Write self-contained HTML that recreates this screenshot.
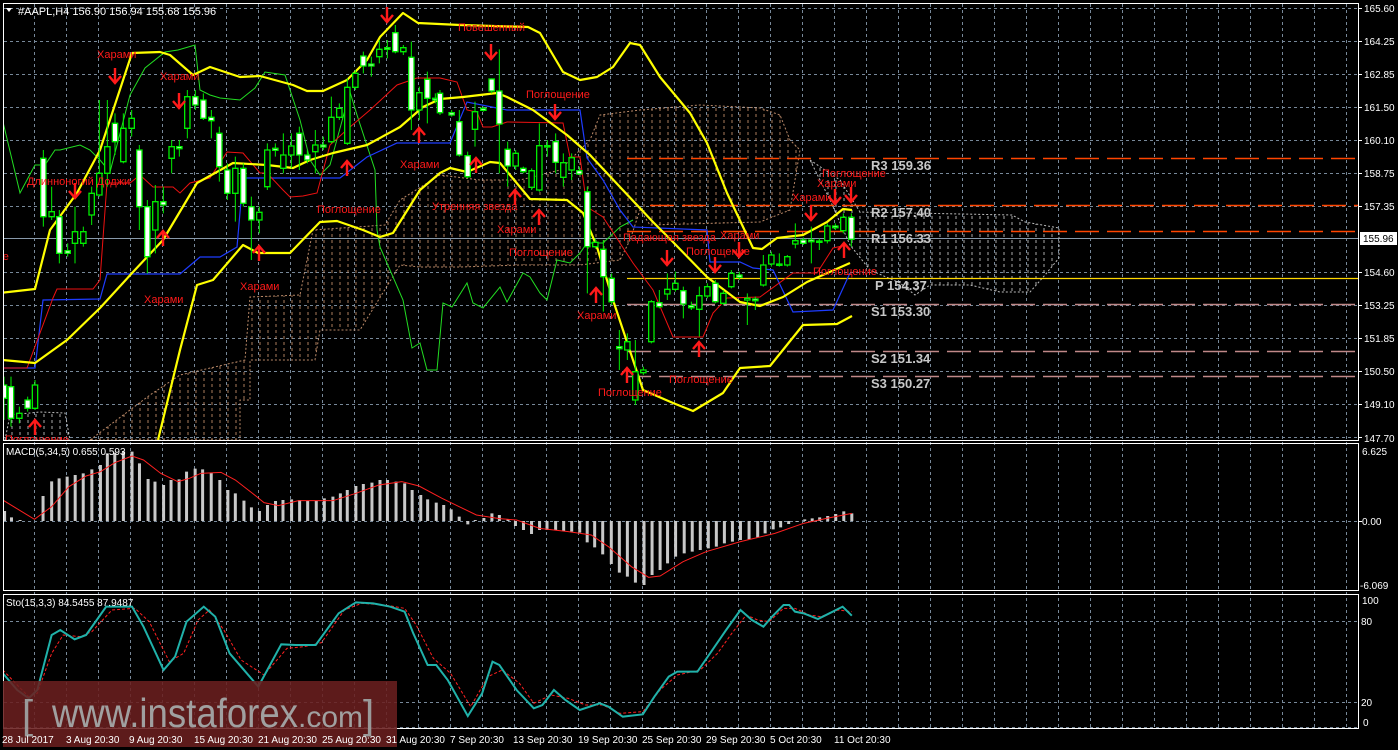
<!DOCTYPE html>
<html><head><meta charset="utf-8"><style>
html,body{margin:0;padding:0;background:#000;width:1398px;height:750px;overflow:hidden}
svg{display:block}
text{font-family:"Liberation Sans","DejaVu Sans",sans-serif}
.lb{fill:#ff1a1a;font-size:11px}
.ax{fill:#fff;font-size:10px}
.pv{fill:#c8c8c8;font-size:13px;font-weight:bold;font-family:"Liberation Mono",monospace}
.ns{vector-effect:non-scaling-stroke}
</style></head><body>
<svg width="1398" height="750" viewBox="0 0 1398 750" xmlns="http://www.w3.org/2000/svg">
<defs>
<pattern id="po" width="8" height="6" patternUnits="userSpaceOnUse"><line x1="4" y1="0" x2="4" y2="3" stroke="#c8926c" stroke-width="1"/></pattern>
<pattern id="pw" width="8" height="6" patternUnits="userSpaceOnUse"><line x1="4" y1="0" x2="4" y2="3" stroke="#aaa" stroke-width="1"/></pattern>
<clipPath id="cm"><rect x="4" y="4" width="1354" height="436"/></clipPath>
<clipPath id="cd"><rect x="4" y="444" width="1354" height="146"/></clipPath>
<clipPath id="cs"><rect x="4" y="595" width="1354" height="133"/></clipPath>
<g id="ad"><path d="M0 -8V6M-6 0L0 7L6 0" fill="none" stroke="#ff1a1a" stroke-width="2.4"/></g>
<g id="au"><path d="M0 8V-6M-6 0L0 -7L6 0" fill="none" stroke="#ff1a1a" stroke-width="2.4"/></g>
</defs>
<rect width="1398" height="750" fill="#000"/>

<!-- grids -->
<g stroke="#778899" stroke-width="1" stroke-dasharray="3,3" fill="none">
<path d="M4 8.5H1358M4 41.5H1358M4 74.5H1358M4 107.5H1358M4 140.5H1358M4 173.5H1358M4 206.5H1358M4 272.5H1358M4 305.5H1358M4 338.5H1358M4 371.5H1358M4 404.5H1358M4 437.5H1358"/>
<path d="M4 521.5H1358M4 621.5H1358M4 702.5H1358M4 727.5H1358"/>
<path d="M34.5 4V728M66.5 4V728M98.5 4V728M130.5 4V728M162.5 4V728M194.5 4V728M226.5 4V728M258.5 4V728M290.5 4V728M322.5 4V728M354.5 4V728M386.5 4V728M418.5 4V728M450.5 4V728M482.5 4V728M514.5 4V728M546.5 4V728M578.5 4V728M610.5 4V728M642.5 4V728M674.5 4V728M706.5 4V728M738.5 4V728M770.5 4V728M802.5 4V728M834.5 4V728M866.5 4V728M898.5 4V728M930.5 4V728M962.5 4V728M994.5 4V728M1026.5 4V728M1058.5 4V728M1090.5 4V728M1122.5 4V728M1154.5 4V728M1186.5 4V728M1218.5 4V728M1250.5 4V728M1282.5 4V728M1314.5 4V728M1346.5 4V728"/>
</g>
<line x1="4" y1="238.5" x2="1358" y2="238.5" stroke="#8899aa" stroke-width="1"/>

<g clip-path="url(#cm)">
<polygon fill="url(#po)" stroke="#d9a07a" stroke-dasharray="2,2" stroke-width="1" opacity="0.85" points="90,440 150,395 180,375 245,360 250,297 300,295 313,230 385,225 400,200 440,175 480,180 520,180 560,170 590,140 600,115 640,110 700,105 760,108 780,115 790,140 800,150 790,210 760,222 650,225 640,210 630,240 620,260 580,265 520,265 460,267 420,267 400,265 360,330 320,330 315,360 300,360 250,360 250,400 240,400 240,440"/>
<polygon fill="url(#pw)" stroke="#bbb" stroke-dasharray="2,2" stroke-width="1" points="810,160 840,180 860,212 1012,215 1025,222 1059,228 1059,258 1045,275 1030,292 1000,292 970,285 930,285 915,295 900,283 870,270 850,245 830,200"/>
<polygon fill="url(#pw)" stroke="#bbb" stroke-dasharray="2,2" stroke-width="1" points="5,440 10,415 40,412 65,413 70,440"/>

<g stroke-width="1.5" fill="none">
<path d="M627 158.5H1358" stroke="#ff4500" stroke-dasharray="24,8"/>
<path d="M650 205.5H1358" stroke="#ff4500" stroke-dasharray="24,8"/>
<path d="M627 231.5H1358" stroke="#ff4500" stroke-dasharray="24,8"/>
<path d="M627 278.5H1358" stroke="#ffd700" stroke-width="1.2"/>
<path d="M627 304.5H1358" stroke="#c08888" stroke-dasharray="24,8"/>
<path d="M627 351.5H1358" stroke="#c08888" stroke-dasharray="24,8"/>
<path d="M627 376.5H1358" stroke="#c08888" stroke-dasharray="24,8"/>
</g>

<polyline fill="none" stroke="#22dd22" stroke-width="1" points="3,122 20,193 35,165 45,165 55,150 60,150 80,145 90,150 100,160 110,172 130,95 145,68 165,52 178,50 195,45 200,90 210,95 220,98 240,100 255,88 265,72 285,75 300,120 310,160 320,175 330,165 345,110 350,92 357,115 375,170 377,230 380,247 403,300 412,348 420,343 427,370 437,370 443,303 452,307 467,283 473,303 483,308 500,287 507,302 523,273 530,277 540,293 547,300 557,260 570,263 580,253 587,243 603,243 620,227 633,220"/>
<polyline fill="none" stroke="#1e3cff" stroke-width="1.2" points="0,368 35,368 43,300 100,299 107,274 180,274 200,257 220,257 237,247 243,178 340,178 367,157 397,143 450,143 467,102 507,110 580,110 587,158 603,180 620,210 633,227 707,230 710,262 740,262 753,268 773,270 793,312 833,310 850,273"/>
<polyline fill="none" stroke="#ee1111" stroke-width="1" points="0,368 27,368 53,298 57,289 93,289 100,280 107,183 130,183 140,175 153,187 173,187 180,193 190,183 210,178 227,152 243,153 260,173 267,173 283,190 290,197 303,196 317,193 330,145 350,127 370,110 397,85 417,78 440,78 457,82 467,110 477,112 483,127 492,127 507,122 563,123 570,157 580,157 587,207 603,217 633,263 653,290 673,337 703,337 713,313 727,298 760,297 793,273 817,273 833,248 847,245"/>

<g fill="none" stroke="#ffff00" stroke-width="2.2" stroke-linejoin="round">
<polyline points="0,293 35,289 50,230 77,193 100,150 132,53 160,52 170,55 193,75 210,67 240,77 260,76 293,85 307,91 323,91 347,80 367,60 380,37 403,13 418,23 460,25 528,27 540,33 563,72 580,80 597,77 613,67 630,43 640,45 660,77 690,113 707,143 727,193 753,248 762,249 777,238 803,235 827,222 843,209 852,210"/>
<polyline points="3,360 35,363 67,340 100,308 133,272 163,240 197,183 233,163 267,165 293,168 310,160 333,153 367,145 400,127 423,107 440,99 463,97 497,93 507,97 533,110 567,135 590,155 620,187 653,222 673,242 707,277 740,302 760,306 783,297 807,282 850,263"/>
<polyline points="158,440 180,350 197,285 213,280 243,245 258,253 290,253 320,222 337,221 363,230 380,237 393,233 420,190 440,173 450,168 467,172 490,162 500,163 530,199 567,200 583,213 597,247 613,300 633,360 643,390 673,403 693,411 723,393 740,368 770,366 803,325 837,324 852,316"/>
</g>

<g transform="scale(0.33333)">
<path class="ns" fill="none" stroke="#00ee00" stroke-width="1" d="M12 1130V1260M33 1130V1280M58 1220V1270M83 1190V1235M105 1140V1230M130 450V680M155 560V660M178 630V790M203 730V770M225 620V790M250 680V740M275 560V675M298 300V590M322 300V560M345 340V465M370 340V490M395 330V410M418 435V690M442 600V820M466 555V760M490 560V640M515 420V520M538 420V470M562 270V415M586 270V330M610 280V360M634 330V415M658 380V545M682 490V600M706 470V665M730 490V620M754 590V780M778 620V700M802 430V570M826 430V470M850 400V520M874 400V505M898 380V510M922 450V490M946 390V520M970 410V450M994 290V430M1018 310V360M1042 235V435M1066 210V270M1090 155V220M1114 170V230M1138 120V190M1162 120V175M1186 75V160M1210 135V165M1234 125V390M1258 260V360M1282 215V370M1306 280V310"/>
<g stroke="#00ee00" stroke-width="1.3">
<rect class="ns" x="4" y="1155" width="16" height="40" fill="#fff"/>
<rect class="ns" x="25" y="1160" width="16" height="95" fill="#fff"/>
<rect class="ns" x="50" y="1240" width="16" height="15" fill="#000"/>
<rect class="ns" x="75" y="1200" width="16" height="25" fill="#fff"/>
<rect class="ns" x="97" y="1155" width="16" height="70" fill="#000"/>
<rect class="ns" x="122" y="475" width="16" height="175" fill="#fff"/>
<rect class="ns" x="147" y="635" width="16" height="15" fill="#000"/>
<rect class="ns" x="170" y="650" width="16" height="110" fill="#fff"/>
<rect class="ns" x="195" y="752" width="16" height="8" fill="#fff"/>
<rect class="ns" x="217" y="695" width="16" height="35" fill="#000"/>
<rect class="ns" x="242" y="695" width="16" height="35" fill="#000"/>
<rect class="ns" x="267" y="580" width="16" height="65" fill="#000"/>
<rect class="ns" x="290" y="520" width="16" height="65" fill="#000"/>
<rect class="ns" x="314" y="440" width="16" height="80" fill="#000"/>
<rect class="ns" x="337" y="370" width="16" height="55" fill="#fff"/>
<rect class="ns" x="362" y="385" width="16" height="100" fill="#000"/>
<rect class="ns" x="387" y="355" width="16" height="30" fill="#000"/>
<rect class="ns" x="410" y="450" width="16" height="170" fill="#fff"/>
<rect class="ns" x="434" y="620" width="16" height="150" fill="#fff"/>
<rect class="ns" x="458" y="605" width="16" height="85" fill="#000"/>
<rect class="ns" x="482" y="605" width="16" height="10" fill="#fff"/>
<rect class="ns" x="507" y="440" width="16" height="35" fill="#000"/>
<rect class="ns" x="530" y="440" width="16" height="6" fill="#fff"/>
<rect class="ns" x="554" y="290" width="16" height="95" fill="#000"/>
<rect class="ns" x="578" y="290" width="16" height="25" fill="#fff"/>
<rect class="ns" x="602" y="300" width="16" height="55" fill="#fff"/>
<rect class="ns" x="626" y="352" width="16" height="10" fill="#fff"/>
<rect class="ns" x="650" y="400" width="16" height="100" fill="#fff"/>
<rect class="ns" x="674" y="510" width="16" height="70" fill="#fff"/>
<rect class="ns" x="698" y="505" width="16" height="75" fill="#000"/>
<rect class="ns" x="722" y="505" width="16" height="105" fill="#fff"/>
<rect class="ns" x="746" y="620" width="16" height="40" fill="#fff"/>
<rect class="ns" x="770" y="637" width="16" height="23" fill="#000"/>
<rect class="ns" x="794" y="450" width="16" height="110" fill="#000"/>
<rect class="ns" x="818" y="445" width="16" height="6" fill="#fff"/>
<rect class="ns" x="842" y="465" width="16" height="40" fill="#000"/>
<rect class="ns" x="866" y="438" width="16" height="27" fill="#000"/>
<rect class="ns" x="890" y="400" width="16" height="65" fill="#fff"/>
<rect class="ns" x="914" y="465" width="16" height="15" fill="#fff"/>
<rect class="ns" x="938" y="435" width="16" height="20" fill="#000"/>
<rect class="ns" x="962" y="435" width="16" height="6" fill="#fff"/>
<rect class="ns" x="986" y="352" width="16" height="73" fill="#000"/>
<rect class="ns" x="1010" y="325" width="16" height="27" fill="#000"/>
<rect class="ns" x="1034" y="262" width="16" height="168" fill="#000"/>
<rect class="ns" x="1058" y="220" width="16" height="42" fill="#000"/>
<rect class="ns" x="1082" y="168" width="16" height="30" fill="#fff"/>
<rect class="ns" x="1106" y="192" width="16" height="6" fill="#fff"/>
<rect class="ns" x="1130" y="148" width="16" height="22" fill="#000"/>
<rect class="ns" x="1154" y="143" width="16" height="5" fill="#fff"/>
<rect class="ns" x="1178" y="98" width="16" height="57" fill="#fff"/>
<rect class="ns" x="1202" y="143" width="16" height="12" fill="#000"/>
<rect class="ns" x="1226" y="172" width="16" height="158" fill="#fff"/>
<rect class="ns" x="1250" y="278" width="16" height="52" fill="#000"/>
<rect class="ns" x="1274" y="238" width="16" height="57" fill="#fff"/>
<rect class="ns" x="1298" y="295" width="16" height="5" fill="#fff"/>
</g></g>

<g transform="translate(440,0) scale(0.33333)">
<path class="ns" fill="none" stroke="#00ee00" stroke-width="1" d="M0 270V345M35 330V350M58 330V470M83 455V535M105 305V440M130 320V335M155 235V280M178 148V520M203 425V560M227 450V510M250 500V520M275 505V570M298 370V575M322 420V470M347 400V520M370 460V560M395 460V540M418 500V525M442 560V880M466 715V745M490 720V935M515 820V915M538 990V1110M562 1000V1080M586 1020V1215M610 1100V1125M634 900V1030M658 870V925M682 820V900M706 815V875M730 860V955M754 905V930M778 860V1010M802 850V895M826 840V910M850 870V915M874 810V865M898 815V840M922 880V975M946 890V930M970 765V860M994 755V800M1018 760V800M1042 765V800M1066 670V745M1090 712V735M1114 680V790M1138 715V750M1162 670V730M1186 670V690M1210 640V700M1234 640V740"/>
<g stroke="#00ee00" stroke-width="1.3">
<rect class="ns" x="-8" y="280" width="16" height="58" fill="#fff"/>
<rect class="ns" x="27" y="338" width="16" height="7" fill="#fff"/>
<rect class="ns" x="50" y="365" width="16" height="100" fill="#fff"/>
<rect class="ns" x="75" y="467" width="16" height="63" fill="#fff"/>
<rect class="ns" x="97" y="335" width="16" height="53" fill="#000"/>
<rect class="ns" x="122" y="325" width="16" height="6" fill="#fff"/>
<rect class="ns" x="147" y="237" width="16" height="36" fill="#fff"/>
<rect class="ns" x="170" y="273" width="16" height="99" fill="#fff"/>
<rect class="ns" x="195" y="448" width="16" height="50" fill="#fff"/>
<rect class="ns" x="219" y="460" width="16" height="38" fill="#000"/>
<rect class="ns" x="242" y="505" width="16" height="10" fill="#fff"/>
<rect class="ns" x="267" y="512" width="16" height="50" fill="#000"/>
<rect class="ns" x="290" y="437" width="16" height="133" fill="#000"/>
<rect class="ns" x="314" y="437" width="16" height="4" fill="#fff"/>
<rect class="ns" x="339" y="425" width="16" height="62" fill="#fff"/>
<rect class="ns" x="362" y="488" width="16" height="44" fill="#000"/>
<rect class="ns" x="387" y="473" width="16" height="37" fill="#000"/>
<rect class="ns" x="410" y="512" width="16" height="10" fill="#fff"/>
<rect class="ns" x="434" y="575" width="16" height="165" fill="#fff"/>
<rect class="ns" x="458" y="727" width="16" height="13" fill="#000"/>
<rect class="ns" x="482" y="748" width="16" height="82" fill="#fff"/>
<rect class="ns" x="507" y="835" width="16" height="70" fill="#fff"/>
<rect class="ns" x="530" y="1040" width="16" height="6" fill="#fff"/>
<rect class="ns" x="554" y="1025" width="16" height="25" fill="#000"/>
<rect class="ns" x="578" y="1115" width="16" height="85" fill="#000"/>
<rect class="ns" x="602" y="1110" width="16" height="8" fill="#000"/>
<rect class="ns" x="626" y="905" width="16" height="120" fill="#000"/>
<rect class="ns" x="650" y="908" width="16" height="12" fill="#fff"/>
<rect class="ns" x="674" y="868" width="16" height="14" fill="#000"/>
<rect class="ns" x="698" y="850" width="16" height="18" fill="#000"/>
<rect class="ns" x="722" y="872" width="16" height="40" fill="#fff"/>
<rect class="ns" x="746" y="917" width="16" height="6" fill="#fff"/>
<rect class="ns" x="770" y="887" width="16" height="41" fill="#000"/>
<rect class="ns" x="794" y="860" width="16" height="28" fill="#000"/>
<rect class="ns" x="818" y="850" width="16" height="55" fill="#fff"/>
<rect class="ns" x="842" y="880" width="16" height="30" fill="#000"/>
<rect class="ns" x="866" y="820" width="16" height="40" fill="#000"/>
<rect class="ns" x="890" y="825" width="16" height="7" fill="#fff"/>
<rect class="ns" x="914" y="895" width="16" height="5" fill="#000"/>
<rect class="ns" x="938" y="897" width="16" height="5" fill="#fff"/>
<rect class="ns" x="962" y="795" width="16" height="60" fill="#000"/>
<rect class="ns" x="986" y="765" width="16" height="27" fill="#000"/>
<rect class="ns" x="1010" y="792" width="16" height="4" fill="#fff"/>
<rect class="ns" x="1034" y="770" width="16" height="25" fill="#000"/>
<rect class="ns" x="1058" y="722" width="16" height="10" fill="#000"/>
<rect class="ns" x="1082" y="720" width="16" height="10" fill="#fff"/>
<rect class="ns" x="1106" y="720" width="16" height="5" fill="#fff"/>
<rect class="ns" x="1130" y="723" width="16" height="4" fill="#fff"/>
<rect class="ns" x="1154" y="678" width="16" height="44" fill="#000"/>
<rect class="ns" x="1178" y="678" width="16" height="5" fill="#fff"/>
<rect class="ns" x="1202" y="652" width="16" height="40" fill="#000"/>
<rect class="ns" x="1226" y="652" width="16" height="66" fill="#fff"/>
</g></g>

<!-- arrows -->
<use href="#ad" x="115" y="76"/><use href="#ad" x="179" y="101"/><use href="#ad" x="75" y="191"/><use href="#ad" x="387" y="15"/>
<use href="#ad" x="491" y="52"/><use href="#ad" x="555" y="112"/><use href="#ad" x="667" y="258"/><use href="#ad" x="715" y="265"/><use href="#ad" x="739" y="250"/><use href="#ad" x="811" y="213"/><use href="#ad" x="835" y="197"/><use href="#ad" x="851" y="195"/>
<use href="#au" x="35" y="427"/><use href="#au" x="163" y="238"/><use href="#au" x="259" y="253"/><use href="#au" x="347" y="168"/><use href="#au" x="419" y="135"/>
<use href="#au" x="476" y="165"/><use href="#au" x="515" y="197"/><use href="#au" x="539" y="217"/><use href="#au" x="596" y="295"/><use href="#au" x="627" y="375"/><use href="#au" x="699" y="349"/><use href="#au" x="844" y="250"/>

<g class="lb">
<text x="97" y="58">Харами</text><text x="160" y="80">Харами</text><text x="27" y="185">Длинноногий Доджи</text>
<text x="400" y="168">Харами</text><text x="317" y="213">Поглощение</text><text x="432" y="210">Утренняя звезда</text>
<text x="240" y="290">Харами</text><text x="144" y="303">Харами</text><text x="-55" y="260">Поглощение</text><text x="-35" y="361">Харами</text><text x="5" y="443">Поглощение</text>
<text x="458" y="31">Повешенный</text><text x="526" y="98">Поглощение</text><text x="497" y="233">Харами</text><text x="509" y="256">Поглощение</text>
<text x="623" y="241">Падающая звезда</text><text x="720" y="239">Харами</text><text x="686" y="255">Поглощение</text><text x="577" y="319">Харами</text>
<text x="598" y="396">Поглощение</text><text x="669" y="383">Поглощение</text><text x="822" y="177">Поглощение</text><text x="817" y="187">Харами</text><text x="792" y="201">Харами</text><text x="813" y="275">Поглощение</text>
</g>
</g>

<g class="pv">
<text x="871" y="170">R3 159.36</text><text x="871" y="217">R2 157.40</text><text x="871" y="243">R1 156.33</text>
<text x="875" y="290">P 154.37</text><text x="871" y="316">S1 153.30</text><text x="871" y="363">S2 151.34</text><text x="871" y="388">S3 150.27</text>
</g>

<g clip-path="url(#cd)">
<g transform="translate(0,440) scale(0.574,0.33333)">
<path class="ns" stroke="#c8c8c8" stroke-width="3" fill="none" d="M8 243V213M20 243V232M35 243V240M75 243V168M90 243V124M103 243V115M117 243V110M131 243V105M145 243V100M160 243V88M175 243V75M187 243V40M200 243V38M215 243V35M230 243V35M243 243V70M258 243V117M270 243V125M285 243V135M298 243V120M312 243V118M325 243V95M340 243V86M353 243V88M368 243V98M383 243V120M397 243V150M410 243V160M425 243V182M438 243V202M452 243V213M466 243V195M480 243V183M493 243V180M508 243V178M522 243V180M536 243V182M551 243V182M565 243V175M580 243V170M593 243V160M605 243V150M620 243V138M633 243V132M648 243V128M662 243V120M675 243V120M690 243V125M705 243V130M718 243V150M733 243V165M745 243V178M760 243V188M773 243V195M786 243V208M800 243V230M815 243V253M828 243V240M843 243V234M857 243V220M870 243V225M885 243V238M898 243V258M912 243V270M926 243V282M940 243V270M953 243V270M968 243V270M982 243V273M996 243V275M1010 243V278M1023 243V307M1036 243V322M1050 243V343M1065 243V372M1079 243V398M1093 243V410M1107 243V428M1122 243V435M1136 243V405M1150 243V390M1163 243V370M1177 243V350M1192 243V340M1206 243V335M1220 243V330M1234 243V325M1248 243V320M1262 243V310M1276 243V305M1290 243V300M1305 243V298M1320 243V292M1333 243V280M1347 243V268M1360 243V262M1374 243V252M1388 243V245M1402 243V238M1415 243V235M1428 243V232M1442 243V228M1456 243V222M1470 243V214M1484 243V220"/>
<polyline class="ns" fill="none" stroke="#ff2020" stroke-width="1" points="0,175 60,238 90,200 120,140 150,108 175,95 200,68 230,48 250,60 280,100 310,125 330,115 350,100 385,97 410,120 440,160 460,188 485,197 520,182 580,182 620,160 660,135 700,125 730,138 770,175 800,200 830,225 870,236 900,240 940,265 990,275 1030,285 1060,320 1100,380 1130,412 1150,408 1190,365 1230,335 1290,305 1350,280 1400,250 1440,235 1484,220"/>
</g></g>

<g clip-path="url(#cs)">
<g transform="translate(0,440) scale(0.574,0.33333)">
<polyline class="ns" fill="none" stroke="#ff2020" stroke-width="1" stroke-dasharray="3,2" points="5,690 30,735 50,770 65,760 90,640 110,585 140,590 160,575 195,510 235,505 260,545 295,665 320,640 345,540 365,510 390,570 420,660 460,705 500,625 530,620 560,608 600,510 630,490 670,495 705,505 725,555 755,655 785,700 820,800 850,710 875,690 905,730 930,790 960,765 990,775 1020,795 1050,795 1080,820 1120,815 1150,750 1180,705 1220,690 1250,640 1275,580 1300,525 1320,540 1340,545 1365,505 1385,505 1410,525 1430,530 1460,510 1484,515"/>
<polyline class="ns" fill="none" stroke="#20b2aa" stroke-width="2" points="5,700 30,750 50,775 65,750 90,585 105,570 130,598 150,585 185,500 230,500 250,560 285,690 305,650 325,545 355,500 375,530 400,640 450,740 490,613 515,615 550,615 590,520 620,487 650,490 680,500 705,515 720,580 745,675 760,675 780,720 815,828 840,760 858,665 870,675 900,750 930,805 945,795 965,750 985,780 1010,810 1045,790 1060,800 1085,830 1120,823 1140,770 1165,710 1180,695 1215,695 1245,620 1265,570 1290,510 1310,540 1330,560 1345,530 1365,495 1375,495 1385,515 1400,520 1425,537 1445,520 1468,500 1484,527"/>
</g></g>

<g fill="none" stroke="#fff" stroke-width="1">
<rect x="3.5" y="3.5" width="1355" height="437"/>
<rect x="3.5" y="443.5" width="1355" height="147"/>
<rect x="3.5" y="594.5" width="1355" height="134"/>
</g>

<rect x="3" y="681" width="394" height="66" fill="#6a1f1f" fill-opacity="0.88"/>
<text x="22" y="728" fill="#9a9a9a" font-size="40">[</text>
<text x="52" y="727" fill="#a0a0a0" font-size="41" textLength="246" lengthAdjust="spacingAndGlyphs">www.instaforex</text>
<text x="298" y="727" fill="#a0a0a0" font-size="30">.com</text>
<text x="363" y="728" fill="#9a9a9a" font-size="40">]</text>

<polygon points="6,8 12,8 9,12" fill="#fff"/>
<text x="18" y="15" fill="#fff" font-size="11">#AAPL,H4  156.90 156.94 155.68 155.96</text>
<text x="6" y="455" fill="#fff" font-size="10">MACD(5,34,5) 0.655 0.593</text>
<text x="6" y="606" fill="#fff" font-size="10">Sto(15,3,3) 84.5455 87.9487</text>

<g stroke="#fff" stroke-width="1"><path d="M1358.5 4V441M1358.5 444V591M1358.5 595V729"/>
<path d="M1358 8.5h4M1358 41.5h4M1358 74.5h4M1358 107.5h4M1358 140.5h4M1358 173.5h4M1358 206.5h4M1358 272.5h4M1358 305.5h4M1358 338.5h4M1358 371.5h4M1358 404.5h4M1358 437.5h4M1358 521.5h4"/></g>
<g class="ax">
<text x="1364" y="12">165.60</text><text x="1364" y="45">164.25</text><text x="1364" y="78">162.85</text><text x="1364" y="111">161.50</text><text x="1364" y="144">160.10</text><text x="1364" y="177">158.75</text><text x="1364" y="210">157.35</text><text x="1364" y="276">154.60</text><text x="1364" y="309">153.25</text><text x="1364" y="342">151.85</text><text x="1364" y="375">150.50</text><text x="1364" y="408">149.10</text><text x="1364" y="442">147.70</text>
<text x="1362" y="455">6.625</text><text x="1362" y="525">0.00</text><text x="1360" y="589">-6.069</text>
<text x="1362" y="604">100</text><text x="1361" y="625">80</text><text x="1361" y="706">20</text><text x="1363" y="726">0</text>
</g>
<rect x="1360" y="232" width="37" height="13" fill="#fff"/>
<text x="1363" y="242" fill="#000" font-size="10">155.96</text>

<g class="ax">
<text x="2" y="743">28 Jul 2017</text><text x="66" y="743">3 Aug 20:30</text><text x="129" y="743">9 Aug 20:30</text><text x="194" y="743">15 Aug 20:30</text><text x="258" y="743">21 Aug 20:30</text><text x="322" y="743">25 Aug 20:30</text><text x="386" y="743">31 Aug 20:30</text><text x="450" y="743">7 Sep 20:30</text><text x="513" y="743">13 Sep 20:30</text><text x="578" y="743">19 Sep 20:30</text><text x="642" y="743">25 Sep 20:30</text><text x="706" y="743">29 Sep 20:30</text><text x="770" y="743">5 Oct 20:30</text><text x="834" y="743">11 Oct 20:30</text>
</g>
</svg>
</body></html>
